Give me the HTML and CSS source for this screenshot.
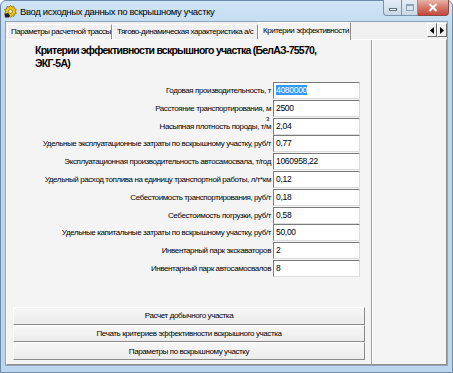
FILE: index.html
```html
<!DOCTYPE html>
<html>

<head>
    <title>Ввод исходных данных по вскрышному участку</title>
    <link rel="stylesheet" href="styles.css">
</head>

<body>

    <div class="window">
        <div class="titlebar">
            <svg class="app-icon" width="13" height="13" viewBox="0 0 13 13">
                <path d="M6.5 0.5 L8 2 L10 1.5 L10.3 3.6 L12.3 4.5 L11.3 6.5 L12.3 8.5 L10.3 9.2 L10 11.3 L8 10.8 L6.5 12.3 L5 10.8 L3 11.3 L2.7 9.2 L0.7 8.5 L1.7 6.5 L0.7 4.5 L2.7 3.6 L3 1.5 L5 2 Z" fill="#e8c31a" stroke="#8a6a08" stroke-width="0.8"/>
                <circle cx="6.5" cy="6.5" r="2" fill="#fff6c0" stroke="#8a6a08" stroke-width="0.7"/>
                <path d="M0.5 9 L4 8 L6 10.5 L5 12.5 L1 12.5 Z" fill="#222"/>
            </svg>
            <span class="title">Ввод исходных данных по вскрышному участку</span>
            <div class="controls">
                <div class="ctl ctl-min"><span class="min-bar"></span></div>
                <div class="ctl ctl-max"><span class="max-box"></span></div>
                <div class="ctl ctl-close">
                    <svg width="10" height="9" viewBox="0 0 10 9">
                        <path d="M1.5 1 L8.5 8 M8.5 1 L1.5 8" stroke="#fff" stroke-width="2"/>
                    </svg>
                </div>
            </div>
        </div>

        <div class="client">
            <div class="tabs">
                <div class="tab tab-1">Параметры расчетной трассы</div>
                <div class="tab tab-2">Тягово-динамическая характеристика а/с</div>
                <div class="tab tab-3 active">Критерии эффективности</div>
                <div class="tab-scroll">
                    <div class="arrow">
                        <svg width="4" height="7" viewBox="0 0 4 7"><path d="M4 0 L0 3.5 L4 7 Z" fill="#000"/></svg>
                    </div>
                    <div class="arrow">
                        <svg width="4" height="7" viewBox="0 0 4 7"><path d="M0 0 L4 3.5 L0 7 Z" fill="#000"/></svg>
                    </div>
                </div>
            </div>

            <div class="page">
                <div class="main">
                    <h2 class="heading">Критерии эффективности вскрышного участка (БелАЗ-75570,<br>ЭКГ-5А)</h2>

                    <div class="form">
                        <div class="label">Годовая производительность, т</div>
                        <div class="field"><span class="sel">4080000</span></div>

                        <div class="label">Расстояние транспортирования, м</div>
                        <div class="field">2500</div>

                        <div class="label"><span class="unit">Насыпная плотность породы, т/м<span class="sup">3</span></span></div>
                        <div class="field">2,04</div>

                        <div class="label">Удельные эксплуатационные затраты по вскрышному участку, руб/т</div>
                        <div class="field">0,77</div>

                        <div class="label">Эксплуатационная производительность автосамосвала, т/год</div>
                        <div class="field">1060958,22</div>

                        <div class="label">Удельный расход топлива на единицу транспортной работы, л/т*км</div>
                        <div class="field">0,12</div>

                        <div class="label">Себестоимость транспортирования, руб/т</div>
                        <div class="field">0,18</div>

                        <div class="label">Себестоимость погрузки, руб/т</div>
                        <div class="field">0,58</div>

                        <div class="label">Удельные капитальные затраты по вскрышному участку, руб/т</div>
                        <div class="field">50,00</div>

                        <div class="label">Инвентарный парк экскаваторов</div>
                        <div class="field">2</div>

                        <div class="label">Инвентарный парк автосамосвалов</div>
                        <div class="field">8</div>
                    </div>

                    <div class="buttons">
                        <button>Расчет добычного участка</button>
                        <button>Печать критериев эффективности вскрышного участка</button>
                        <button>Параметры по вскрышному участку</button>
                    </div>
                </div>
                <div class="side"></div>
            </div>
        </div>
    </div>

</body>

</html>
```

FILE: styles.css
```css
body {
    margin: 0;
    font-family: "Liberation Sans", Arial, sans-serif;
    background-color: #ffffff;
}

.window {
    box-sizing: border-box;
    width: 453px;
    height: 373px;
    border: 1px solid #6f8aa6;
    border-radius: 6px 6px 0 0;
    background: linear-gradient(#cfe4f6, #bcd6ee 40px, #bdd6ee);
    display: flex;
    flex-direction: column;
}

.titlebar {
    height: 20px;
    display: flex;
    align-items: center;
    position: relative;
}

.app-icon {
    margin-left: 3px;
    margin-top: 1px;
}

.title {
    margin-left: 3px;
    font-size: 9.5px;
    letter-spacing: -0.35px;
    color: #000;
}

.controls {
    display: flex;
    margin-left: auto;
    margin-right: 3px;
    align-self: flex-start;
    margin-top: -1px;
}

.ctl {
    box-sizing: border-box;
    height: 16px;
    border: 1px solid #7d93aa;
    border-top: none;
    display: flex;
    align-items: center;
    justify-content: center;
}

.ctl-min {
    width: 18px;
    border-radius: 0 0 0 4px;
    border-right: none;
    background: linear-gradient(#e4edf6, #c9d8e7);
}

.ctl-max {
    width: 17px;
    background: linear-gradient(#e4edf6, #c9d8e7);
}

.ctl-close {
    width: 31px;
    border-left: none;
    border-color: #8d4a45;
    border-radius: 0 0 4px 0;
    background: linear-gradient(#e8b4a8, #d4776a 50%, #c44a3c);
}

.min-bar {
    width: 8px;
    height: 3px;
    margin-top: 4px;
    background: #fff;
    border: 1px solid #5d6f82;
    box-sizing: border-box;
}

.max-box {
    width: 8px;
    height: 7px;
    border: 1px solid #8fa2b6;
    border-top-width: 2px;
    box-sizing: border-box;
}

.client {
    box-sizing: border-box;
    height: 345px;
    margin: 0 4px;
    border: 1px solid #8ea5bc;
    background-color: #f0f0f0;
    display: flex;
    flex-direction: column;
}

.tabs {
    height: 17px;
    display: flex;
    align-items: flex-end;
    padding-left: 1px;
    font-size: 8px;
    letter-spacing: -0.45px;
    position: relative;
    z-index: 1;
}

.tab {
    box-sizing: border-box;
    height: 15px;
    border-top: 1px solid #ffffff;
    border-left: 1px solid #ffffff;
    border-right: 1px solid #8d8d8d;
    padding-left: 3px;
    line-height: 14px;
    white-space: nowrap;
    overflow: hidden;
    color: #000;
}

.tab-1 {
    width: 105px;
}

.tab-2 {
    width: 146px;
    padding-left: 4px;
}

.tab-3 {
    width: 93px;
    padding-left: 4px;
}

.tab.active {
    height: 18px;
    margin-bottom: -1px;
    background-color: #f4f4f4;
    line-height: 16px;
}

.tab-scroll {
    display: flex;
    margin-left: auto;
    align-self: flex-start;
    margin-top: 1px;
}

.arrow {
    box-sizing: border-box;
    width: 10px;
    height: 14px;
    background-color: #f0f0f0;
    border-top: 1px solid #ffffff;
    border-left: 1px solid #ffffff;
    border-right: 1px solid #6c6c6c;
    border-bottom: 1px solid #6c6c6c;
    display: flex;
    align-items: center;
    justify-content: center;
}

.page {
    box-sizing: border-box;
    flex: 1;
    border-top: 1px solid #ffffff;
    border-left: 1px solid #ffffff;
    border-right: 1px solid #8d8d8d;
    border-bottom: 1px solid #8d8d8d;
    background-color: #f4f4f4;
    display: flex;
}

.main {
    box-sizing: border-box;
    width: 365px;
    border-right: 1px solid #a0a0a0;
    padding-right: 11px;
    display: flex;
    flex-direction: column;
}

.side {
    flex: 1;
    border-left: 1px solid #ffffff;
}

.heading {
    margin: 4px 0 0 28px;
    font-size: 10.5px;
    line-height: 13px;
    letter-spacing: -0.75px;
    font-weight: bold;
    color: #000;
}

.form {
    margin-top: 12px;
    display: grid;
    grid-template-columns: 1fr 87px;
    column-gap: 2px;
    row-gap: 0.8px;
    grid-auto-rows: 17px;
    font-size: 8px;
    letter-spacing: -0.4px;
}

.label {
    text-align: right;
    white-space: nowrap;
    line-height: 17px;
    color: #000;
}

.unit {
    position: relative;
}

.sup {
    position: absolute;
    right: 2px;
    top: -7px;
    font-size: 6px;
    line-height: 8px;
}

.field {
    box-sizing: border-box;
    background-color: #ffffff;
    border-top: 1px solid #7a7a7a;
    border-left: 1px solid #7a7a7a;
    border-right: 1px solid #dcdcdc;
    border-bottom: 1px solid #dcdcdc;
    padding-left: 2px;
    line-height: 15px;
    font-size: 8.5px;
    letter-spacing: -0.3px;
    color: #000;
}

.sel {
    background-color: #3399ff;
    color: #ffffff;
}

.buttons {
    margin: 30px 0 0 6px;
    display: flex;
    flex-direction: column;
}

.buttons button {
    height: 17.7px;
    margin: 0;
    padding: 0;
    font-family: "Liberation Sans", Arial, sans-serif;
    font-size: 8px;
    letter-spacing: -0.4px;
    color: #000;
    background: linear-gradient(#f7f7f7, #ececec);
    border: 1px solid #a8a8a8;
    border-top-color: #ffffff;
    border-left-color: #ffffff;
    border-bottom-color: #8a8a8a;
    border-right-color: #8a8a8a;
    width: 352px;
}
```
